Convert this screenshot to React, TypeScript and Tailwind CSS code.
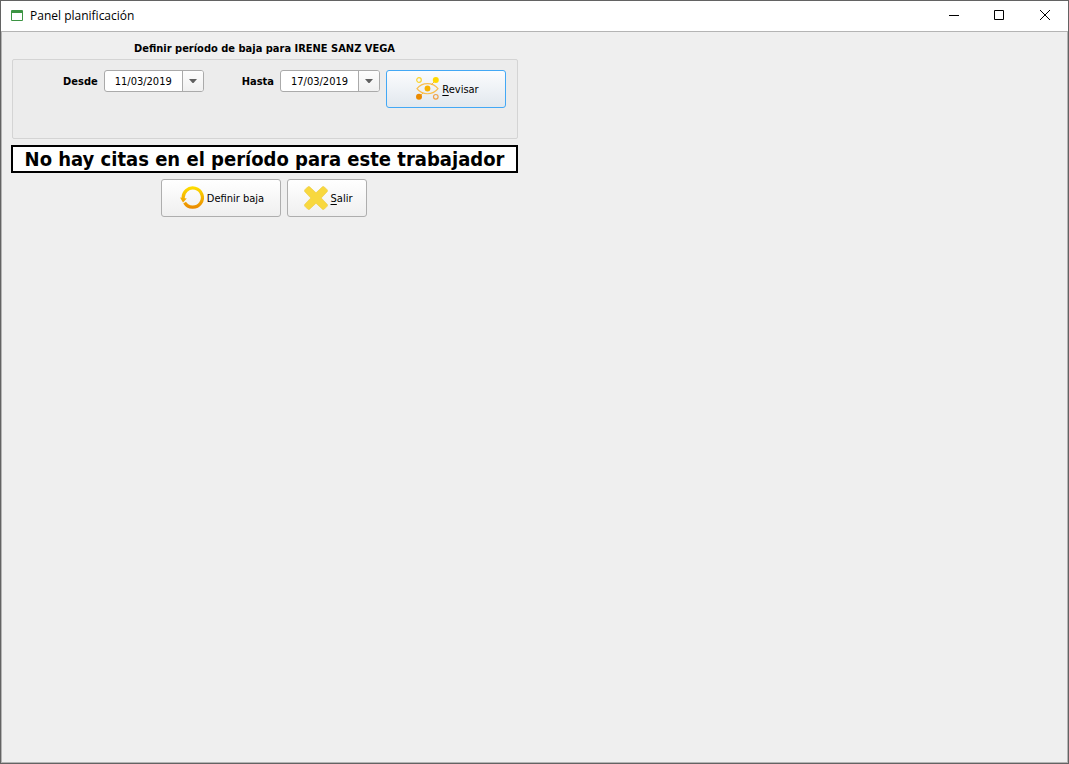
import { useId, useState } from "react";
import type { ReactNode } from "react";

function WindowButton({ label, children }: { label: string; children: ReactNode }) {
  return (
    <button type="button" aria-label={label} className="flex h-full w-[46px] items-center justify-center hover:bg-gray-200">
      <svg width="12" height="12" viewBox="0 0 12 12" fill="none" stroke="#000">
        {children}
      </svg>
    </button>
  );
}

function TitleBar() {
  return (
    <header className="flex h-[31px] items-center justify-between border-b border-[#b4b4b4] bg-white pl-[10px]">
      <div className="flex items-center gap-[7px]">
        <svg width="12" height="12" viewBox="0 0 12 12">
          <rect y="0" width="12" height="11" rx="1" fill="#3c9443" />
          <rect x="1" y="3" width="10" height="7" fill="#fff" />
        </svg>
        <h1 className="font-['Open_Sans',sans-serif] text-[12px] leading-4">Panel planificación</h1>
      </div>
      <div className="flex h-full items-center">
        <WindowButton label="Minimizar">
          <path d="M2 5.5h10" />
        </WindowButton>
        <WindowButton label="Maximizar">
          <path d="M1.5 0.5h9v9h-9z" />
        </WindowButton>
        <WindowButton label="Cerrar">
          <path d="M1 0l10 10M11 0L1 10" />
        </WindowButton>
      </div>
    </header>
  );
}

function DateField({ label, initial }: { label: string; initial: string }) {
  const id = useId();
  const [value, setValue] = useState(initial);
  return (
    <div className="flex items-center gap-[6px]">
      <label htmlFor={id} className="pt-[2px] font-bold">
        {label}
      </label>
      <div className="flex h-[22px] w-[100px] overflow-hidden rounded-[3px] border border-[#aaaaaa] bg-white">
        <input
          id={id}
          type="text"
          value={value}
          onChange={(event) => setValue(event.target.value)}
          className="w-0 min-w-0 flex-1 pt-[2px] text-center outline-none"
        />
        <button
          type="button"
          aria-label={`Abrir calendario ${label}`}
          className="flex w-[21px] items-center justify-center border-l border-[#aaaaaa] bg-linear-to-b from-[#fdfdfd] to-[#f0f0f0]"
        >
          <svg width="8" height="4" viewBox="0 0 8 4">
            <path d="M0 0h8L4.5 4h-1z" fill="#606060" />
          </svg>
        </button>
      </div>
    </div>
  );
}

function ReviewIcon() {
  return (
    <svg width="24" height="24" viewBox="0 0 24 24" fill="none">
      <path d="M2 11.7C7 5 18 5 23 11.7C18 18.4 7 18.4 2 11.7z" stroke="#f9be4e" strokeWidth="1.2" />
      <path d="M5 19L8 16M16 8L19 5" stroke="#f5b740" />
      <circle cx="12.5" cy="11.5" r="2.9" fill="#f7b200" />
      <circle cx="4" cy="3" r="2.3" stroke="#fbd52f" strokeWidth="1.2" />
      <circle cx="20.8" cy="3" r="3" fill="#ffd900" />
      <circle cx="4" cy="19.8" r="3" fill="#ea8a00" />
      <circle cx="20.8" cy="19.8" r="2.3" stroke="#eea24a" strokeWidth="1.2" />
    </svg>
  );
}

function RestartIcon() {
  return (
    <svg width="24" height="24" viewBox="0 0 24 24" fill="none">
      <defs>
        <linearGradient id="restart-tone" x1="0" y1="0" x2="0" y2="24" gradientUnits="userSpaceOnUse">
          <stop offset="0" stopColor="#ffe100" />
          <stop offset="1" stopColor="#e98300" />
        </linearGradient>
      </defs>
      <path d="M3.3 13A9.6 9.6 0 1 1 4.6 16.6" stroke="url(#restart-tone)" strokeWidth="3.2" />
      <path d="M0 11.5L6.8 12.5L3 16.5z" fill="url(#restart-tone)" />
    </svg>
  );
}

function CrossIcon() {
  return (
    <svg width="24" height="24" viewBox="0 0 24 24" fill="none">
      <path
        d="M0.7 5.6Q0 4.6 0.9 3.7L3.7 0.9Q4.6 0 5.6 0.8L12 6.8L18.4 0.8Q19.4 0 20.3 0.9L23.1 3.7Q24 4.6 23.3 5.6L17.2 12L23.3 18.4Q24 19.4 23.1 20.3L20.3 23.1Q19.4 24 18.4 23.2L12 17.2L5.6 23.2Q4.6 24 3.7 23.1L0.9 20.3Q0 19.4 0.7 18.4L6.8 12z"
        fill="#f8d83f"
        stroke="#ecc93a"
        strokeWidth="0.6"
      />
    </svg>
  );
}

const actionButton =
  "flex h-[38px] items-center justify-center gap-[3px] rounded-[3px] border border-[#aeaeae] bg-linear-to-b from-white to-[#efefef] pl-[3px]";

export default function App() {
  return (
    <div className="flex min-h-screen flex-col border border-[#636363] bg-[#efefef] font-['DejaVu_Sans_Condensed','DejaVu_Sans',sans-serif] text-[11px] leading-4 text-black">
      <TitleBar />
      <main className="flex-1 border-x border-b border-[#b4b4b4] px-[9px] pt-[9px]">
        <div className="flex w-full max-w-[507px] flex-col">
          <h2 className="text-center font-bold">Definir período de baja para IRENE SANZ VEGA</h2>
          <section className="mt-[2px] ml-px flex h-20 items-start justify-end rounded-[2px] border border-[#d4d4d4] bg-[#ececec] pt-[10px] pr-[11px]">
            <div className="flex gap-[38px]">
              <DateField label="Desde" initial="11/03/2019" />
              <DateField label="Hasta" initial="17/03/2019" />
            </div>
            <button
              type="button"
              className="ml-[6px] flex h-[38px] w-[120px] items-center justify-center gap-[3px] rounded-[3px] border border-[#43a8f5] bg-linear-to-b from-[#fbfcfe] to-[#e2e8ee] pl-[2px]"
            >
              <ReviewIcon />
              <span className="pt-[2px]">
                <span className="underline underline-offset-2">R</span>evisar
              </span>
            </button>
          </section>
          <p role="status" className="mt-[6px] border-2 border-black bg-white text-center text-[20px] leading-6 font-bold">
            No hay citas en el período para este trabajador
          </p>
          <div className="mt-[6px] flex justify-center gap-[6px] pr-[2px]">
            <button type="button" className={`${actionButton} w-[120px]`}>
              <RestartIcon />
              <span className="pt-[2px]">Definir baja</span>
            </button>
            <button type="button" className={`${actionButton} w-20`}>
              <CrossIcon />
              <span className="pt-[2px]">
                <span className="underline underline-offset-2">S</span>alir
              </span>
            </button>
          </div>
        </div>
      </main>
    </div>
  );
}
